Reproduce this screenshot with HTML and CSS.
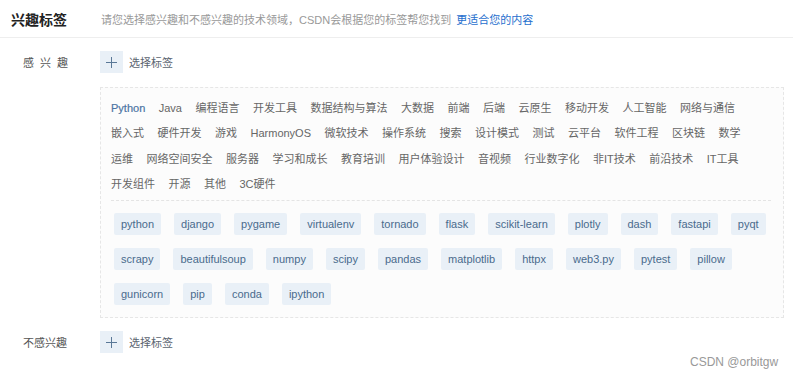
FILE: index.html
```html
<!DOCTYPE html>
<html lang="zh-CN">
  <head>
    <meta charset="UTF-8" />
    <meta name="viewport" content="width=device-width, initial-scale=1.0" />
    <title>兴趣标签</title>
    <link rel="stylesheet" href="styles.css">
  </head>
  <body>
    <div class="header">
      <h2 class="title">兴趣标签</h2>
      <p class="desc">
        请您选择感兴趣和不感兴趣的技术领域，CSDN会根据您的标签帮您找到
        <a href="#" class="link">更适合您的内容</a>
      </p>
    </div>

    <div class="row">
      <span class="label spaced">感兴趣</span>
      <button class="add-btn"><span class="plus"></span></button>
      <span class="add-text">选择标签</span>
    </div>

    <div class="tag-box">
      <div class="categories">
        <span class="cat active">Python</span>
        <span class="cat">Java</span>
        <span class="cat">编程语言</span>
        <span class="cat">开发工具</span>
        <span class="cat">数据结构与算法</span>
        <span class="cat">大数据</span>
        <span class="cat">前端</span>
        <span class="cat">后端</span>
        <span class="cat">云原生</span>
        <span class="cat">移动开发</span>
        <span class="cat">人工智能</span>
        <span class="cat">网络与通信</span>
        <span class="cat">嵌入式</span>
        <span class="cat">硬件开发</span>
        <span class="cat">游戏</span>
        <span class="cat">HarmonyOS</span>
        <span class="cat">微软技术</span>
        <span class="cat">操作系统</span>
        <span class="cat">搜索</span>
        <span class="cat">设计模式</span>
        <span class="cat">测试</span>
        <span class="cat">云平台</span>
        <span class="cat">软件工程</span>
        <span class="cat">区块链</span>
        <span class="cat">数学</span>
        <span class="cat">运维</span>
        <span class="cat">网络空间安全</span>
        <span class="cat">服务器</span>
        <span class="cat">学习和成长</span>
        <span class="cat">教育培训</span>
        <span class="cat">用户体验设计</span>
        <span class="cat">音视频</span>
        <span class="cat">行业数字化</span>
        <span class="cat">非IT技术</span>
        <span class="cat">前沿技术</span>
        <span class="cat">IT工具</span>
        <span class="cat">开发组件</span>
        <span class="cat">开源</span>
        <span class="cat">其他</span>
        <span class="cat">3C硬件</span>
      </div>
      <div class="chips">
        <span class="chip">python</span>
        <span class="chip">django</span>
        <span class="chip">pygame</span>
        <span class="chip">virtualenv</span>
        <span class="chip">tornado</span>
        <span class="chip">flask</span>
        <span class="chip">scikit-learn</span>
        <span class="chip">plotly</span>
        <span class="chip">dash</span>
        <span class="chip">fastapi</span>
        <span class="chip">pyqt</span>
        <span class="chip">scrapy</span>
        <span class="chip">beautifulsoup</span>
        <span class="chip">numpy</span>
        <span class="chip">scipy</span>
        <span class="chip">pandas</span>
        <span class="chip">matplotlib</span>
        <span class="chip">httpx</span>
        <span class="chip">web3.py</span>
        <span class="chip">pytest</span>
        <span class="chip">pillow</span>
        <span class="chip">gunicorn</span>
        <span class="chip">pip</span>
        <span class="chip">conda</span>
        <span class="chip">ipython</span>
      </div>
    </div>

    <div class="row">
      <span class="label">不感兴趣</span>
      <button class="add-btn"><span class="plus"></span></button>
      <span class="add-text">选择标签</span>
    </div>

    <div class="watermark">CSDN @orbitgw</div>
  </body>
</html>
```

FILE: styles.css
```css
body {
  margin: 0;
  background-color: #fff;
  font-family: "Liberation Sans", Arial, "Noto Sans CJK SC", sans-serif;
  font-size: 11px;
  color: #555;
  position: relative;
  height: 380px;
  overflow: hidden;
}
.header {
  display: flex;
  align-items: center;
  height: 37px;
  border-bottom: 1px solid #eeeeee;
  padding-left: 11px;
}
.title {
  margin: 0;
  width: 90px;
  font-size: 14px;
  font-weight: bold;
  color: #222;
}
.desc {
  margin: 0;
  color: #999;
  font-size: 11px;
}
.link {
  color: #1f6fce;
  text-decoration: none;
  margin-left: 2px;
}
.row {
  display: flex;
  align-items: center;
  padding-left: 23px;
  margin-top: 13px;
}
.label {
  width: 77px;
  color: #555;
  font-size: 11px;
}
.spaced {
  letter-spacing: 6px;
}
.add-btn {
  width: 23px;
  height: 22px;
  padding: 0;
  border: none;
  background-color: #e9f0f7;
  display: flex;
  align-items: center;
  justify-content: center;
  cursor: pointer;
}
.plus {
  position: relative;
  width: 11px;
  height: 11px;
}
.plus::before,
.plus::after {
  content: "";
  position: absolute;
  background-color: #5a7897;
}
.plus::before {
  left: 5px;
  top: 0;
  width: 1px;
  height: 11px;
}
.plus::after {
  left: 0;
  top: 5px;
  width: 11px;
  height: 1px;
}
.add-text {
  margin-left: 6px;
  color: #5b6470;
}
.tag-box {
  margin: 14px 9px 0 100px;
  border: 1px dashed #e6e6e6;
  background-color: #fcfcfc;
  padding: 8px 10px 12px 10px;
}
.categories {
  display: flex;
  flex-wrap: wrap;
  column-gap: 13.5px;
  line-height: 25.3px;
  color: #666;
  padding-bottom: 3px;
  border-bottom: 1px dashed #e4e4e4;
  margin-right: 2px;
}
.cat {
  cursor: pointer;
}
.cat.active {
  color: #4b74a3;
  -webkit-text-stroke: 0.2px #4b74a3;
}
.chips {
  display: flex;
  flex-wrap: wrap;
  gap: 13px;
  padding: 12px 0 0 3px;
}
.chip {
  height: 22px;
  line-height: 22px;
  padding: 0 7px;
  background-color: #e9f0f7;
  color: #4a6b8d;
  border-radius: 2px;
}
.watermark {
  position: absolute;
  left: 690px;
  top: 355px;
  color: #999;
  font-size: 12px;
}
```
